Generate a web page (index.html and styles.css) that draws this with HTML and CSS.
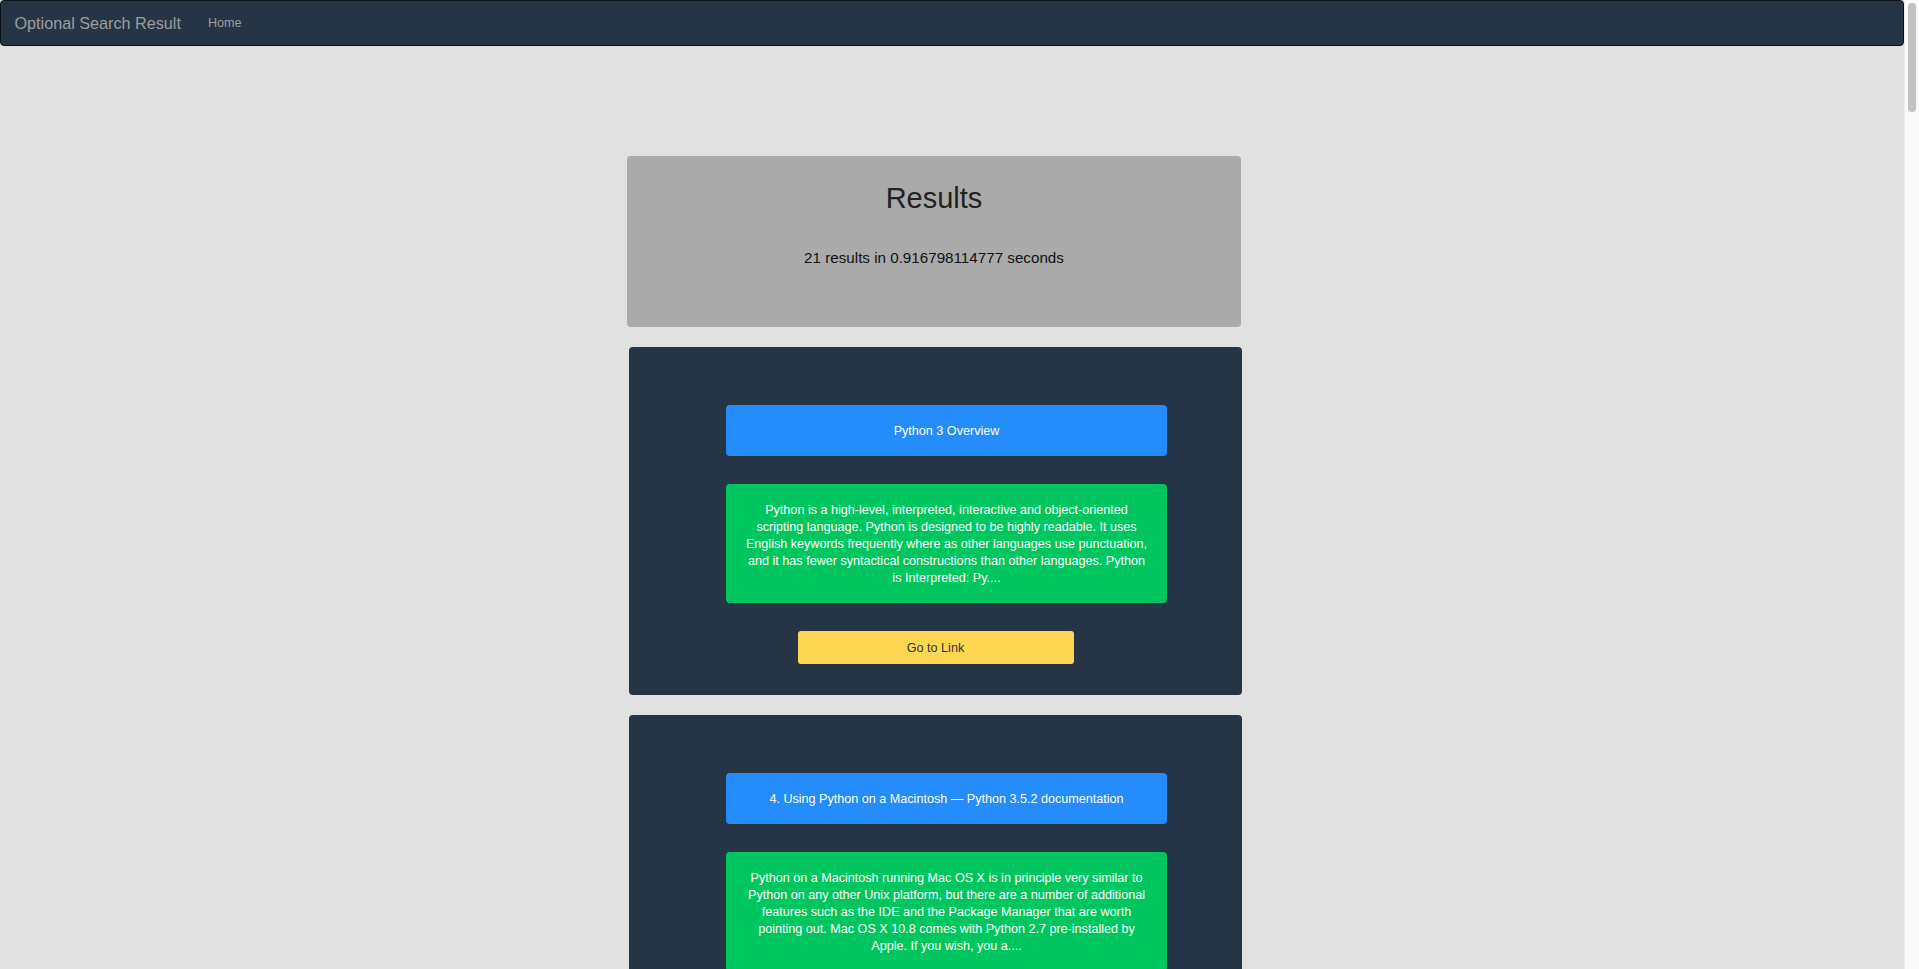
FILE: index.html
```html
<!DOCTYPE html>
<html lang="en">
<head>
<meta charset="utf-8">
<title>Optional Search Result</title>
<link rel="stylesheet" href="styles.css">
</head>
<body>
<nav class="navbar">
  <a class="brand" href="#">Optional Search Result</a>
  <a class="nav-link" href="#">Home</a>
</nav>
<main class="results-wrap">
  <section class="summary">
    <h1>Results</h1>
    <p class="stats">21 results in 0.916798114777 seconds</p>
  </section>

  <article class="card">
    <div class="title">Python 3 Overview</div>
    <div class="desc">Python is a high-level, interpreted, interactive and object-oriented scripting language. Python is designed to be highly readable. It uses English keywords frequently where as other languages use punctuation, and it has fewer syntactical constructions than other languages. Python is Interpreted: Py....</div>
    <a class="go" href="#">Go to Link</a>
  </article>

  <article class="card">
    <div class="title">4. Using Python on a Macintosh — Python 3.5.2 documentation</div>
    <div class="desc">Python on a Macintosh running Mac OS X is in principle very similar to Python on any other Unix platform, but there are a number of additional features such as the IDE and the Package Manager that are worth pointing out. Mac OS X 10.8 comes with Python 2.7 pre-installed by Apple. If you wish, you a....</div>
    <a class="go" href="#">Go to Link</a>
  </article>

  <article class="card">
    <div class="title">The Python Tutorial — Python 3.5.2 documentation</div>
    <div class="desc">Python is an easy to learn, powerful programming language. It has efficient high-level data structures and a simple but effective approach to object-oriented programming. Python's elegant syntax and dynamic typing, together with its interpreted nature, make it an ideal language for scripting and rapid ap....</div>
    <a class="go" href="#">Go to Link</a>
  </article>

  <article class="card">
    <div class="title">Welcome to Python.org</div>
    <div class="desc">The official home of the Python Programming Language. Python is a programming language that lets you work quickly and integrate systems more effectively. Whether you're new to programming or an experienced developer, it's easy to learn and use Python. Get started with the beginner's guide and the tut....</div>
    <a class="go" href="#">Go to Link</a>
  </article>

  <article class="card">
    <div class="title">Python (programming language) - Wikipedia</div>
    <div class="desc">Python is a widely used high-level, general-purpose, interpreted, dynamic programming language. Its design philosophy emphasizes code readability, and its syntax allows programmers to express concepts in fewer lines of code than possible in languages such as C++ or Java. The language provides constr....</div>
    <a class="go" href="#">Go to Link</a>
  </article>

  <article class="card">
    <div class="title">Learn Python - Free Interactive Python Tutorial</div>
    <div class="desc">Welcome to the LearnPython.org interactive Python tutorial. Whether you are an experienced programmer or not, this website is intended for everyone who wishes to learn the Python programming language. You are welcome to join our group on Facebook for questions, discussions and updates. After you co....</div>
    <a class="go" href="#">Go to Link</a>
  </article>

  <article class="card">
    <div class="title">Python Tutorial - Tutorialspoint</div>
    <div class="desc">Python is a general-purpose interpreted, interactive, object-oriented, and high-level programming language. It was created by Guido van Rossum during 1985 - 1990. Like Perl, Python source code is also available under the GNU General Public License. This tutorial gives enough understanding on Pyth....</div>
    <a class="go" href="#">Go to Link</a>
  </article>

  <article class="card">
    <div class="title">Installing Python Modules — Python 3.5.2 documentation</div>
    <div class="desc">As a popular open source development project, Python has an active supporting community of contributors and users that also make their software available for other Python developers to use under open source license terms. This allows Python users to share and collaborate effectively, benefitin....</div>
    <a class="go" href="#">Go to Link</a>
  </article>

  <article class="card">
    <div class="title">Python 3 Tutorial - Learn Python in simple steps</div>
    <div class="desc">This tutorial introduces the reader informally to the basic concepts and features of the Python language and system. It helps to have a Python interpreter handy for hands-on experience, but all examples are self-contained, so the tutorial can be read off-line as well. For a description of standa....</div>
    <a class="go" href="#">Go to Link</a>
  </article>

  <article class="card">
    <div class="title">Python For Beginners | Python.org</div>
    <div class="desc">Welcome! Are you completely new to programming? If not then we presume you will be looking for information about why and how to get started with Python. Fortunately an experienced programmer in any programming language (whatever it may be) can pick up Python very quickly. It's also easy for begin....</div>
    <a class="go" href="#">Go to Link</a>
  </article>

  <article class="card">
    <div class="title">Built-in Functions — Python 3.5.2 documentation</div>
    <div class="desc">The Python interpreter has a number of functions and types built into it that are always available. They are listed here in alphabetical order. Return the absolute value of a number. The argument may be an integer or a floating point number. If the argument is a complex number, its magnitude is ret....</div>
    <a class="go" href="#">Go to Link</a>
  </article>

  <article class="card">
    <div class="title">Python Basics - Codecademy</div>
    <div class="desc">Learn to program in Python, a powerful language used by sites like YouTube and Dropbox. Learn the fundamentals of programming to build web apps and manipulate data. Master Python loops to deepen your knowledge. Along the way you will write small programs and complete interactive exercises in your b....</div>
    <a class="go" href="#">Go to Link</a>
  </article>

  <article class="card">
    <div class="title">Download Python | Python.org</div>
    <div class="desc">Looking for Python with a different OS? Python for Windows, Linux/UNIX, Mac OS X, Other. Want to help test development versions of Python? Prereleases. Looking for Python 2.7? See below for specific releases. Information about specific ports, and developer info. Python releases by version numbe....</div>
    <a class="go" href="#">Go to Link</a>
  </article>

  <article class="card">
    <div class="title">Newest 'python' Questions - Stack Overflow</div>
    <div class="desc">Python is a dynamic and strongly typed programming language designed to emphasize usability. Two similar but incompatible versions of Python are in widespread use (2 and 3). Please consider using a version-specific tag for questions about the version you are using, and add the details of the pro....</div>
    <a class="go" href="#">Go to Link</a>
  </article>

  <article class="card">
    <div class="title">The Python Standard Library — Python 3.5.2 documentation</div>
    <div class="desc">While The Python Language Reference describes the exact syntax and semantics of the Python language, this library reference manual describes the standard library that is distributed with Python. It also describes some of the optional components that are commonly included in Python distribut....</div>
    <a class="go" href="#">Go to Link</a>
  </article>

  <article class="card">
    <div class="title">Dive Into Python 3</div>
    <div class="desc">Dive Into Python 3 covers Python 3 and its differences from Python 2. Compared to Dive Into Python, it's about 20% revised and 80% new material. The book is now complete, but feedback is always welcome. You can read the book online, or download it as a PDF. Each chapter builds on the one bef....</div>
    <a class="go" href="#">Go to Link</a>
  </article>

  <article class="card">
    <div class="title">Python Programming Language - GeeksforGeeks</div>
    <div class="desc">Python is a widely used general-purpose, high level programming language. It was initially designed by Guido van Rossum in 1991 and developed by Python Software Foundation. It was mainly developed for emphasis on code readability, and its syntax allows programmers to express concepts in fewer li....</div>
    <a class="go" href="#">Go to Link</a>
  </article>

  <article class="card">
    <div class="title">3. An Informal Introduction to Python — Python 3.5.2 documentation</div>
    <div class="desc">In the following examples, input and output are distinguished by the presence or absence of prompts: to repeat the example, you must type everything after the prompt, when the prompt appears; lines that do not begin with a prompt are output from the interpreter. Note that a secondary prompt on a l....</div>
    <a class="go" href="#">Go to Link</a>
  </article>

  <article class="card">
    <div class="title">Python Course: Python Tutorial</div>
    <div class="desc">This online course is aimed at beginners and at advanced programmers alike. It covers the basics of Python as well as object-oriented programming, regular expressions, functional programming and numerical programming with NumPy. Every chapter contains examples which you can run in the interactiv....</div>
    <a class="go" href="#">Go to Link</a>
  </article>

  <article class="card">
    <div class="title">Google's Python Class | Python Education</div>
    <div class="desc">Welcome to Google's Python Class -- this is a free class for people with a little bit of programming experience who want to learn Python. The class includes written materials, lecture videos, and lots of code exercises to practice Python coding. These materials are used within Google to introduc....</div>
    <a class="go" href="#">Go to Link</a>
  </article>

  <article class="card">
    <div class="title">Think Python: How to Think Like a Computer Scientist</div>
    <div class="desc">Think Python is an introduction to Python programming for beginners. It starts with basic concepts of programming, and is carefully designed to define all terms when they are first used and to develop each new concept in a logical progression. Larger pieces, like recursion and object-oriented pro....</div>
    <a class="go" href="#">Go to Link</a>
  </article>
</main>
<div class="scrollbar" aria-hidden="true"><div class="thumb"></div></div>
</body>
</html>
```

FILE: styles.css
```css
html {
  background: #e1e1e1;
}

body {
  margin: 0 15px 0 0;
  background: #e1e1e1;
  font-family: "Liberation Sans", Arial, Helvetica, sans-serif;
  font-size: 12.6px;
  color: #333;
}

a {
  text-decoration: none;
}

.navbar {
  height: 46px;
  box-sizing: border-box;
  background: #263545;
  border: 1px solid #0c1117;
  border-radius: 4px;
  display: flex;
  align-items: center;
}

.brand {
  padding: 0 13.5px;
  font-size: 16.2px;
  line-height: 18px;
  color: #9d9d9d;
}

.nav-link {
  padding: 0 13.5px;
  font-size: 12.6px;
  line-height: 18px;
  color: #9d9d9d;
}

.results-wrap {
  width: 616px;
  margin: 110px 0 0 calc(50% - 325px);
  padding-bottom: 40px;
  display: flex;
  flex-direction: column;
  gap: 20px;
}

.summary {
  width: 614px;
  height: 171px;
  box-sizing: border-box;
  padding-top: 26px;
  background: #aaaaaa;
  border-radius: 4px;
  text-align: center;
}

.summary h1 {
  margin: 0;
  font-size: 29px;
  line-height: 32px;
  font-weight: normal;
  color: #222;
}

.stats {
  margin: 35px 0 0;
  font-size: 15.2px;
  line-height: 18px;
  color: #111;
}

.card {
  width: 613px;
  margin-left: 2px;
  box-sizing: border-box;
  padding: 58px 0 31px;
  background: #263545;
  border-radius: 4px;
  display: flex;
  flex-direction: column;
  align-items: center;
  gap: 28px;
}

.title {
  width: 441px;
  margin-left: 22px;
  box-sizing: border-box;
  padding: 17px 10px 15px;
  line-height: 19px;
  background: #248cfb;
  color: #fff;
  border-radius: 4px;
  text-align: center;
}

.desc {
  width: 441px;
  margin-left: 22px;
  box-sizing: border-box;
  padding: 18px 17px 16px;
  line-height: 17px;
  background: #00c660;
  color: #fff;
  border-radius: 4px;
  text-align: center;
}

.go {
  width: 276px;
  height: 33px;
  background: #fed651;
  color: #333;
  border-radius: 3px;
  display: flex;
  align-items: center;
  justify-content: center;
}

/* page scrollbar, drawn over the right edge of the window */
.scrollbar {
  position: fixed;
  top: 0;
  right: 0;
  width: 15px;
  height: 100vh;
  box-sizing: border-box;
  background: #fafafa;
  border-left: 1px solid #ececec;
}

.thumb {
  position: absolute;
  top: 3px;
  left: 3px;
  width: 8px;
  height: 109px;
  background: #c2c2c2;
  border-radius: 4px;
}
```
